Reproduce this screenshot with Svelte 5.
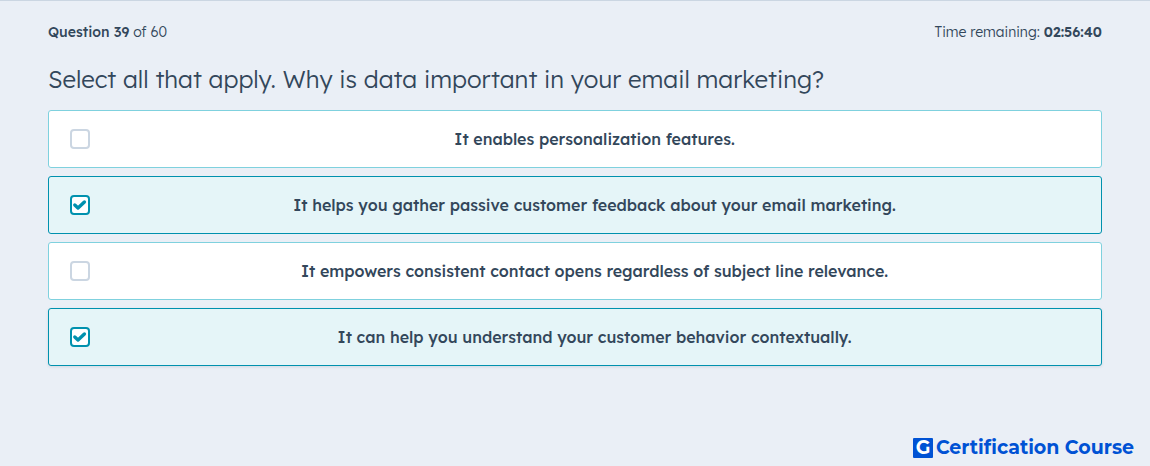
<script>
  let options = $state([
    { text: 'It enables personalization features.', checked: false },
    { text: 'It helps you gather passive customer feedback about your email marketing.', checked: true },
    { text: 'It empowers consistent contact opens regardless of subject line relevance.', checked: false },
    { text: 'It can help you understand your customer behavior contextually.', checked: true }
  ]);
</script>

<main>
  <header>
    <p><strong>Question 39</strong> of 60</p>
    <p>Time remaining: <strong class="clock">02:56:40</strong></p>
  </header>

  <h1 id="question">Select all that apply. Why is data important in your email marketing?</h1>

  <div class="options" role="group" aria-labelledby="question">
    {#each options as option}
      <label class="option" class:selected={option.checked}>
        <input type="checkbox" bind:checked={option.checked} />
        <span class="box">
          {#if option.checked}
            <svg viewBox="0 0 16 16" aria-hidden="true">
              <path d="M2.8 8 L6 11 L12.4 5" />
            </svg>
          {/if}
        </span>
        <span class="text">{option.text}</span>
      </label>
    {/each}
  </div>

  <footer>
    <span class="mark">G</span>
    <span>Certification Course</span>
  </footer>
</main>

<style>
  :global(body) {
    margin: 0;
    background: #eaeff6;
  }

  main {
    box-sizing: border-box;
    min-height: 100vh;
    display: flex;
    flex-direction: column;
    padding: 20px 48px 8px;
    border-top: 1px solid #cbd6e2;
    color: #33475b;
    font-family: "Lexend Deca", Lexend, Inter, sans-serif;
  }

  header {
    display: flex;
    justify-content: space-between;
    font-size: 14px;
    font-weight: 300;
    line-height: 22px;
  }

  p {
    margin: 0;
  }

  strong {
    font-weight: 500;
  }

  .clock {
    font-weight: 600;
  }

  h1 {
    margin: 20px 0 14px;
    font-size: 24px;
    font-weight: 300;
    line-height: 33px;
  }

  .options {
    display: flex;
    flex-direction: column;
    gap: 8px;
  }

  .option {
    position: relative;
    display: flex;
    align-items: center;
    box-sizing: border-box;
    min-height: 58px;
    padding: 12px 2px 12px 21px;
    border: 1px solid #7fd1de;
    border-radius: 3px;
    background: #fff;
    cursor: pointer;
  }

  .option.selected {
    border-color: #0091ae;
    background: #e5f5f8;
  }

  .option:last-child {
    box-shadow: 0 1px 3px rgba(45, 62, 80, 0.12);
  }

  input {
    position: absolute;
    width: 20px;
    height: 20px;
    margin: 0;
    opacity: 0;
    cursor: pointer;
  }

  .box {
    flex: none;
    box-sizing: border-box;
    width: 20px;
    height: 20px;
    border: 2px solid #cbd6e2;
    border-radius: 4px;
    background: #fff;
  }

  .selected .box {
    border-color: #0091ae;
  }

  input:focus-visible + .box {
    outline: 2px solid #7fd1de;
  }

  .box svg {
    display: block;
    width: 16px;
    height: 16px;
    fill: none;
    stroke: #0091ae;
    stroke-width: 3.4;
    stroke-linecap: round;
    stroke-linejoin: round;
  }

  .text {
    flex: 1;
    text-align: center;
    font-size: 16px;
    font-weight: 500;
    line-height: 24px;
  }

  footer {
    display: flex;
    align-items: center;
    justify-content: flex-end;
    gap: 3px;
    margin: auto -32px 0 0;
    padding-top: 16px;
    color: #0052d4;
    font-family: Montserrat, Inter, sans-serif;
    font-size: 19px;
    font-weight: 700;
    line-height: 20px;
  }

  .mark {
    width: 20px;
    border-radius: 1px;
    background: #0052d4;
    color: #fff;
    text-align: center;
  }
</style>
